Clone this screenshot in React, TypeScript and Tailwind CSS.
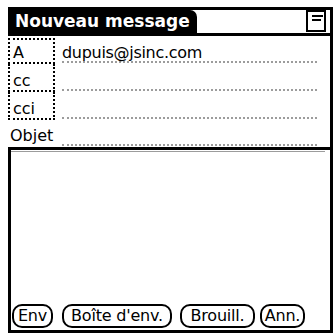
const font = { fontFamily: '"DejaVu Sans", "Liberation Sans", sans-serif' }

type FieldProps = {
  label: string
  value?: string
  first?: boolean
}

// one address line: dotted label cell on the left, dotted-underlined input on the right
function AddressRow({ label, value, first }: FieldProps) {
  return (
    <div className={`flex ${first ? 'h-[26px]' : 'h-[28px]'}`}>
      <div
        className={`w-[47px] shrink-0 border-x-2 border-b-2 border-dotted border-black pl-[3px] ${
          first ? 'border-t-2 pt-[4px]' : 'pt-[8px]'
        }`}
      >
        {label}
      </div>
      <div className="flex-1 pl-[7px] pr-[13px]">
        <div
          className={`border-b-2 border-dotted border-[#9c9c9c] tracking-[-0.3px] ${
            first ? 'h-[25px] pt-[6px]' : 'h-[27px] pt-[8px]'
          }`}
        >
          {value}
        </div>
      </div>
    </div>
  )
}

function Btn({ children, w }: { children: string; w: string }) {
  return (
    <div
      className={`${w} h-[24px] shrink-0 rounded-[10px] border-2 border-black flex items-center justify-center text-[16px] leading-none tracking-[-0.2px]`}
    >
      {children}
    </div>
  )
}

export default function App() {
  return (
    <div className="w-[334px] h-[334px] bg-white pl-[8px] pt-[7px] pr-[1px] pb-[1px]" style={font}>
      <div className="h-full flex flex-col border-t-[3px] border-r-[3px] border-b-[3px] border-black text-black text-[16px] leading-[18px]">
        {/* title bar */}
        <div className="flex h-[23px] shrink-0">
          <div className="w-[189px] bg-black rounded-tr-[7px] text-white font-bold text-[17px] leading-[23px] pl-[7px]">
            Nouveau message
          </div>
          <div className="flex-1" />
          <div className="w-[20px] h-[22px] mr-[4px] border-2 border-black pl-[4px] pt-[3px] flex flex-col gap-[2px]">
            <div className="h-[2px] w-[11px] bg-black" />
            <div className="h-[2px] w-[9px] bg-black" />
          </div>
        </div>
        <div className="h-[3px] bg-black shrink-0" />

        {/* header fields */}
        <div className="mt-[2px] flex flex-col shrink-0">
          <AddressRow label="A" value="dupuis@jsinc.com" first />
          <AddressRow label="cc" />
          <AddressRow label="cci" />
          <div className="flex h-[27px]">
            <div className="w-[50px] shrink-0 pl-[2px] pt-[7px]">Objet</div>
            <div className="flex-1 pl-[4px] pr-[13px]">
              <div className="h-[26px] border-b-2 border-dotted border-[#9c9c9c]" />
            </div>
          </div>
        </div>
        <div className="h-[3px] bg-black shrink-0" />

        {/* message body */}
        <div className="flex-1 flex flex-col border-l-[3px] border-black">
          <div className="h-[1px] mt-[1px] mr-[5px] bg-[#9c9c9c]" />
          <div className="flex-1" />
          <div className="flex pb-[2px] pl-[1px]">
            <Btn w="w-[41px]">Env</Btn>
            <div className="w-[9px]" />
            <Btn w="w-[110px]">Boîte d'env.</Btn>
            <div className="w-[8px]" />
            <Btn w="w-[75px]">Brouill.</Btn>
            <div className="w-[5px]" />
            <Btn w="w-[45px]">Ann.</Btn>
          </div>
        </div>
      </div>
    </div>
  )
}
